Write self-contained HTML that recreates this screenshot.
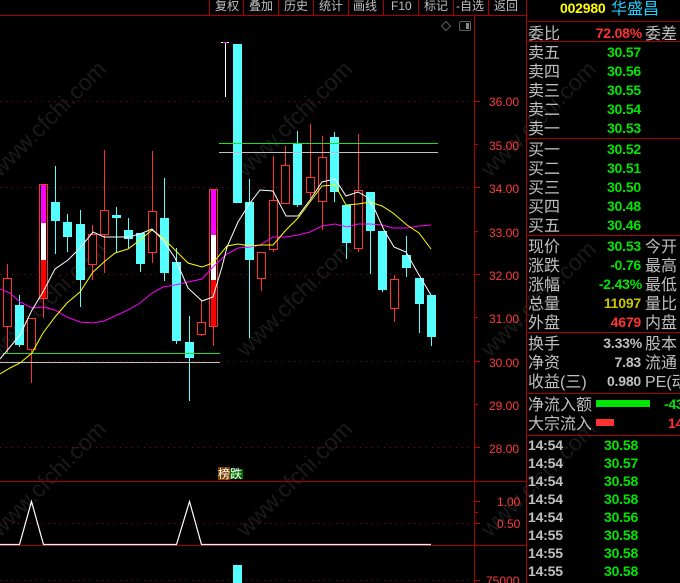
<!DOCTYPE html>
<html><head><meta charset="utf-8"><style>
html,body{margin:0;padding:0;background:#000;width:680px;height:583px;overflow:hidden}
svg{display:block}
.c{font-family:"Liberation Sans","WenQuanYi Zen Hei","Noto Sans CJK SC",sans-serif;font-size:16px;fill:#c0c0c0}
.b{font-family:"Liberation Sans","WenQuanYi Zen Hei","Noto Sans CJK SC",sans-serif;font-size:12px;fill:#c0c0c0}
.a{font-family:"Liberation Sans",sans-serif;font-size:12px;fill:#ff3c3c}
.n{font-family:"Liberation Sans",sans-serif;font-weight:bold;font-size:14px;letter-spacing:-.2px;text-anchor:end}
.t{font-family:"Liberation Sans",sans-serif;font-weight:bold;font-size:14px;letter-spacing:-.2px}
.g{fill:#00e600}.y{fill:#c8c800}.r{fill:#ff3232}.w{fill:#c0c0c0}
.wm{font-family:"Liberation Sans",sans-serif;font-size:23px;fill:#1a1a1a}
</style></head><body>
<svg width="680" height="583" viewBox="0 0 680 583" xmlns="http://www.w3.org/2000/svg">
<rect width="680" height="583" fill="#000"/>
<g class="wm">
<text transform="translate(0,178) rotate(-45)">www.cfchi.com</text>
<text transform="translate(246,178) rotate(-45)">www.cfchi.com</text>
<text transform="translate(490,178) rotate(-45)">www.cfchi.com</text>
<text transform="translate(0,358) rotate(-45)">www.cfchi.com</text>
<text transform="translate(246,358) rotate(-45)">www.cfchi.com</text>
<text transform="translate(490,358) rotate(-45)">www.cfchi.com</text>
<text transform="translate(0,538) rotate(-45)">www.cfchi.com</text>
<text transform="translate(246,538) rotate(-45)">www.cfchi.com</text>
<text transform="translate(490,538) rotate(-45)">www.cfchi.com</text>
</g>
<g shape-rendering="crispEdges">
<path d="M0 101.5H474M0 187.5H474M0 274.5H474M0 361.5H474M0 447.5H474M0 523.5H474M0 580.5H474" stroke="#a00000" stroke-dasharray="1 5" fill="none"/>
<path d="M0 15.5H526M0 481.5H526M0 545.5H526M474.5 15V583M526.5 0V583M209.5 0V15M243.5 0V15M278.5 0V15M313.5 0V15M348.5 0V15M383.5 0V15M418.5 0V15M453.5 0V15M488.5 0V15M527 21.5H680M527 41.5H680M527 138.5H680M527 235.5H680M527 332.5H680M527 393.5H680M527 435.5H680" stroke="#a80000" fill="none"/>
<path d="M475 101.5H480M475 144.5H478M475 187.5H480M475 231.5H478M475 274.5H480M475 317.5H478M475 361.5H480M475 404.5H478M475 447.5H480M475 501.5H480M475 512.5H478M475 523.5H480M475 580.5H480" stroke="#c00000" fill="none"/>

<path d="M19.5 295V347M55.5 166V254M67.5 214V252M80.5 210V307M116.5 207V252M128.5 218V248M140.5 233V272M164.5 178V281M176.5 248V344M189.5 316V401M249.5 179V338M297.5 131V207M334.5 132V202M346.5 205V259M370.5 192V274M382.5 231V292M406.5 236V277M419.5 278V333M431.5 295V346" stroke="#55ffff" fill="none"/>
<path d="M7.5 264V353M31.5 318V383M43.5 299V318M92.5 225V280M104.5 150V273M152.5 151V263M201.5 301V336M213.5 327V346M261.5 252V291M273.5 156V252M285.5 146V204M310.5 124V198M322.5 136V230M358.5 134V252M394.5 275V322" stroke="#ff3232" fill="none"/>
<path d="M225.5 42V97" stroke="#fff" fill="none"/>
<rect x="221" y="42" width="8" height="1" fill="#fff"/><rect x="223" y="42" width="4" height="1" fill="#f0f"/>

<g fill="#55ffff">
<rect x="15" y="305" width="9" height="40"/><rect x="51" y="202" width="9" height="19"/><rect x="63" y="222" width="9" height="15"/><rect x="76" y="224" width="9" height="56"/><rect x="112" y="215" width="9" height="3"/><rect x="124" y="230" width="9" height="9"/><rect x="136" y="233" width="9" height="31"/><rect x="160" y="218" width="9" height="55"/><rect x="172" y="262" width="9" height="79"/><rect x="185" y="342" width="9" height="16"/><rect x="233" y="44" width="9" height="159"/><rect x="245" y="202" width="9" height="58"/><rect x="293" y="143" width="9" height="62"/><rect x="330" y="137" width="9" height="55"/><rect x="342" y="205" width="9" height="38"/><rect x="366" y="192" width="9" height="39"/><rect x="378" y="231" width="9" height="59"/><rect x="402" y="255" width="9" height="13"/><rect x="415" y="278" width="9" height="26"/><rect x="427" y="295" width="9" height="42"/>
<rect x="233" y="565" width="9" height="18"/>
</g>
<g fill="#000" stroke="#ff3232">
<rect x="3.5" y="278.5" width="8" height="48"/><rect x="27.5" y="318.5" width="8" height="31"/><rect x="88.5" y="234.5" width="8" height="30"/><rect x="100.5" y="210.5" width="8" height="24"/><rect x="148.5" y="211.5" width="8" height="41"/><rect x="197.5" y="322.5" width="8" height="12"/><rect x="257.5" y="252.5" width="8" height="26"/><rect x="269.5" y="200.5" width="8" height="49"/><rect x="281.5" y="165.5" width="8" height="38"/><rect x="306.5" y="177.5" width="8" height="15"/><rect x="318.5" y="157.5" width="8" height="44"/><rect x="354.5" y="190.5" width="8" height="58"/><rect x="390.5" y="279.5" width="8" height="29"/>
</g>
<rect x="39.5" y="184.5" width="8" height="114" fill="#000" stroke="#ff3232"/>
<rect x="41" y="185" width="5" height="38" fill="#f0f"/><rect x="41" y="223" width="5" height="37" fill="#fff"/><rect x="41" y="260" width="5" height="38" fill="#f00"/>
<rect x="209.5" y="189.5" width="8" height="137" fill="#000" stroke="#ff3232"/>
<rect x="211" y="190" width="5" height="45" fill="#f0f"/><rect x="211" y="235" width="5" height="45" fill="#fff"/><rect x="211" y="280" width="5" height="46" fill="#f00"/>
<rect x="219" y="143" width="219" height="1" fill="#1ee01e"/><rect x="219" y="152" width="219" height="1" fill="#c0c0c0"/>
<rect x="3" y="353" width="217" height="1" fill="#1ee01e"/><rect x="0" y="362" width="220" height="1" fill="#c0c0c0"/>
</g>
<polyline fill="none" stroke="#f0f" points="0,289 10,293 20,302 32,308 43,307 55,310 67,317 80,322 93,323 104,321 117,315 128,310 140,303 152,293 163,287 175,285 188,282 202,279 213,267 227,254 238,248 250,247 260,245 273,237 286,237 298,235 310,232 322,226 335,224 347,227 358,224 370,224 382,225 393,228 407,228 419,226 431,225"/>
<polyline fill="none" stroke="#ff0" points="0,374 10,368 20,363 32,353 43,333 55,317 67,303 80,292 93,272 104,262 115,253 128,249 140,240 152,230 163,238 175,250 188,263 202,267 213,263 227,246 238,244 250,246 260,245 273,245 286,230 298,218 310,202 322,186 335,185 346,205 358,204 370,202 382,206 393,213 407,225 419,233 431,249"/>
<polyline fill="none" stroke="#fff" points="0,359 10,347 20,335 32,310 43,292 55,269 68,260 80,248 93,232 104,237 128,237 140,234 152,229 163,240 175,258 188,288 202,301 213,297 222,267 227,247 238,222 250,203 260,190 273,191 286,216 298,216 310,200 322,182 335,179 346,196 358,192 367,197 375,210 384,230 394,247 406,252 419,275 431,295"/>
<path d="M0 544.5H19.5L31.5 501.5L43.5 544.5H176.5L189.5 501.5L201.5 544.5H431" fill="none" stroke="#fff" stroke-width="1.2"/>
<path d="M446 21.5L450.5 26L446 30.5L441.5 26Z" fill="none" stroke="#606060"/>
<rect x="459.5" y="21.5" width="11" height="9" rx="1.5" fill="none" stroke="#606060"/><rect x="466" y="23" width="3" height="6" fill="#8a8a8a"/>

<rect x="218" y="467" width="12" height="13" fill="#7a3f00"/><rect x="230" y="469" width="13" height="10" fill="#007000"/>
<text class="b" x="218" y="478" style="fill:#fff">榜跌</text>

<g class="b">
<text x="215" y="10">复权</text><text x="249" y="10">叠加</text><text x="284" y="10">历史</text><text x="319" y="10">统计</text><text x="353" y="10">画线</text><text x="391" y="10">F10</text><text x="424" y="10">标记</text><text x="456" y="10">-自选</text><text x="494" y="10">返回</text>
</g>
<g class="a">
<text x="489" y="106">36.00</text><text x="489" y="150">35.00</text><text x="489" y="193">34.00</text><text x="489" y="237">33.00</text><text x="489" y="280">32.00</text><text x="489" y="323">31.00</text><text x="489" y="367">30.00</text><text x="489" y="410">29.00</text><text x="489" y="453">28.00</text><text x="497" y="506">1.00</text><text x="497" y="528">0.50</text><text x="486" y="585">75000</text>
</g>

<text class="t" x="560" y="13" style="fill:#ffff00">002980</text>
<text class="c" x="611" y="14" style="fill:#1fd0ff">华盛昌</text>

<g class="c">
<text x="528" y="39">委比</text><text x="645" y="39">委差</text>
<text x="528" y="58">卖五</text><text x="528" y="77">卖四</text><text x="528" y="96">卖三</text><text x="528" y="115">卖二</text><text x="528" y="134">卖一</text>
<text x="528" y="155">买一</text><text x="528" y="174">买二</text><text x="528" y="193">买三</text><text x="528" y="212">买四</text><text x="528" y="231">买五</text>
<text x="528" y="252">现价</text><text x="528" y="271">涨跌</text><text x="528" y="290">涨幅</text><text x="528" y="309">总量</text><text x="528" y="328">外盘</text>
<text x="645" y="252">今开</text><text x="645" y="271">最高</text><text x="645" y="290">最低</text><text x="645" y="309">量比</text><text x="645" y="328">内盘</text>
<text x="528" y="349">换手</text><text x="528" y="368">净资</text><text x="528" y="387">收益(三)</text>
<text x="645" y="349">股本</text><text x="645" y="368">流通</text><text x="645" y="387">PE(动</text>
<text x="528" y="410">净流入额</text><text x="528" y="429">大宗流入</text>
</g>
<g class="n">
<text class="r" x="642" y="38">72.08%</text>
<text class="g" x="641" y="57">30.57</text><text class="g" x="641" y="76">30.56</text><text class="g" x="641" y="95">30.55</text><text class="g" x="641" y="114">30.54</text><text class="g" x="641" y="133">30.53</text>
<text class="g" x="641" y="154">30.52</text><text class="g" x="641" y="173">30.51</text><text class="g" x="641" y="192">30.50</text><text class="g" x="641" y="211">30.48</text><text class="g" x="641" y="230">30.46</text>
<text class="g" x="641" y="251">30.53</text><text class="g" x="641" y="270">-0.76</text><text class="g" x="642" y="289">-2.43%</text><text class="y" x="641" y="308">11097</text><text class="r" x="641" y="327">4679</text>
<text class="w" x="642" y="348">3.33%</text><text class="w" x="641" y="367">7.83</text><text class="w" x="641" y="386">0.980</text>
</g>
<rect x="596" y="400" width="54" height="7" fill="#00e600" shape-rendering="crispEdges"/>
<rect x="596" y="419" width="18" height="7" fill="#ff3232" shape-rendering="crispEdges"/>
<text class="t g" x="664" y="409">-43</text>
<text class="t r" x="668" y="428">14</text>
<g class="t">
<text class="w" x="528" y="450">14:54</text><text class="g" x="604" y="450">30.58</text>
<text class="w" x="528" y="468">14:54</text><text class="g" x="604" y="468">30.57</text>
<text class="w" x="528" y="486">14:54</text><text class="g" x="604" y="486">30.58</text>
<text class="w" x="528" y="504">14:54</text><text class="g" x="604" y="504">30.58</text>
<text class="w" x="528" y="522">14:54</text><text class="g" x="604" y="522">30.56</text>
<text class="w" x="528" y="540">14:55</text><text class="g" x="604" y="540">30.58</text>
<text class="w" x="528" y="558">14:55</text><text class="g" x="604" y="558">30.58</text>
<text class="w" x="528" y="576">14:55</text><text class="g" x="604" y="576">30.58</text>
</g>
</svg>
</body></html>
